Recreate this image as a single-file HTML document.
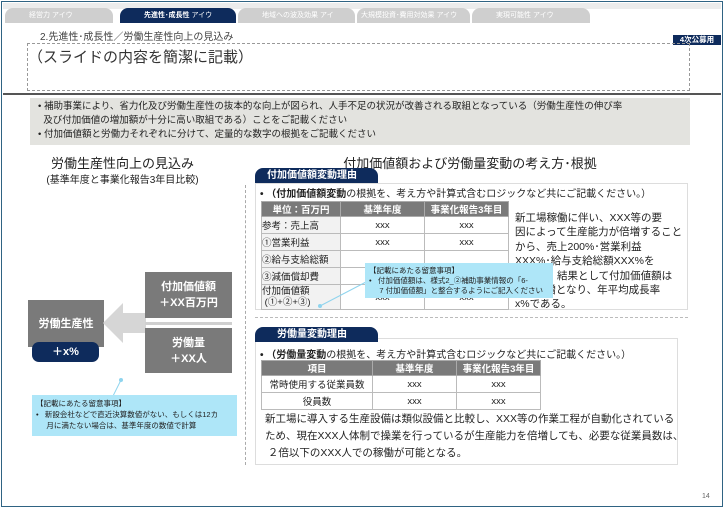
<!DOCTYPE html><html><head><meta charset="utf-8"><style>
*{margin:0;padding:0;box-sizing:border-box}
body{width:724px;height:509px;background:#fff;font-family:"Liberation Sans","Noto Sans CJK JP",sans-serif;position:relative;overflow:hidden;color:#222}
.a{position:absolute}
.tab{position:absolute;top:8px;height:15px;background:#cfcfcf;color:#fff;font-size:7px;line-height:15px;padding-left:24px;border-radius:8px 8px 0 0}
.pill{position:absolute;background:#0e2b5c;color:#fff;font-weight:bold;font-size:10px;border-radius:8px 8px 0 0;padding-left:12px;line-height:15px}
table{border-collapse:collapse;position:absolute;font-size:9.5px;table-layout:fixed}
td{border:1px solid #bbb;height:17px;text-align:center;color:#222}
th{background:#7a7a7a;color:#fff;border:1px solid #aaa;height:15px;font-size:9.5px}
.gb{position:absolute;background:#7a7a7a;color:#fff;font-weight:bold;font-size:11px;text-align:center;display:flex;align-items:center;justify-content:center;line-height:16px}
</style></head><body>
<div class="a" style="left:1px;top:1px;width:722px;height:506px;border:1.5px solid #2f6383"></div>
<div class="a" style="left:3px;top:3px;width:718px;height:6px;background:#ececec"></div>
<div class="tab" style="left:5px;width:108px">経営力 アイウ</div>
<div class="tab" style="left:120px;width:116px;background:#0e2b5c;font-weight:bold">先進性･成長性 <span style="font-weight:normal">アイウ</span></div>
<div class="tab" style="left:238px;width:117px">地域への波及効果 アイ</div>
<div class="tab" style="left:357px;width:113px;padding-left:4px">大規模投資･費用対効果 アイウ</div>
<div class="tab" style="left:472px;width:118px">実現可能性 アイウ</div>
<div class="a" style="left:40px;top:28px;font-size:10px;color:#404040">2.先進性･成長性／労働生産性向上の見込み</div>
<div class="a" style="left:673px;top:35px;width:48px;height:10px;background:#0e2b5c;color:#fff;font-size:7.5px;font-weight:bold;line-height:10px;text-align:center">4次公募用</div>
<div class="a" style="left:27px;top:43px;width:663px;height:48px;border:1px dashed #999"></div>
<div class="a" style="left:28px;top:46px;font-size:15px;color:#333">（スライドの内容を簡潔に記載）</div>
<div class="a" style="left:3px;top:93px;width:718px;height:2px;background:#555"></div>
<div class="a" style="left:30px;top:98px;width:660px;height:47px;background:#e3e3df;font-size:9.5px;line-height:14px;padding:2px 8px;color:#222">
• 補助事業により、省力化及び労働生産性の抜本的な向上が図られ、人手不足の状況が改善される取組となっている（労働生産性の伸び率<br>&nbsp;&nbsp;及び付加価値の増加額が十分に高い取組である）ことをご記載ください<br>• 付加価値額と労働力それぞれに分けて、定量的な数字の根拠をご記載ください</div>
<div class="a" style="left:30px;top:153px;width:185px;text-align:center;font-size:13px">労働生産性向上の見込み</div>
<div class="a" style="left:30px;top:171px;width:185px;text-align:center;font-size:10px">(基準年度と事業化報告3年目比較)</div>
<div class="a" style="left:245px;top:185px;height:280px;border-left:1px dashed #aaa"></div>
<div class="a" style="left:250px;top:153px;width:440px;text-align:center;font-size:13px">付加価値額および労働量変動の考え方･根拠</div>
<div class="gb" style="left:28px;top:300px;width:76px;height:47px">労働生産性</div>
<div class="a" style="left:32px;top:342px;width:67px;height:20px;background:#0e2b5c;border-radius:7px;color:#fff;font-weight:bold;font-size:11px;text-align:center;line-height:20px">＋x%</div>
<svg class="a" style="left:103px;top:303px" width="43" height="40"><polygon points="0,20 20,0 20,10 43,10 43,30 20,30 20,40" fill="#d6d6d6"/></svg>
<div class="gb" style="left:145px;top:272px;width:87px;height:46px">付加価値額<br>＋XX百万円</div>
<div class="a" style="left:145px;top:322px;width:87px;height:3px;background:#d0d0d0"></div>
<div class="gb" style="left:145px;top:328px;width:87px;height:45px">労働量<br>＋XX人</div>
<svg class="a" style="left:110px;top:378px" width="15" height="20"><line x1="11" y1="2" x2="3" y2="18" stroke="#8fd4ee" stroke-width="1"/><circle cx="11" cy="2" r="2" fill="#8fd4ee"/></svg>
<div class="a" style="left:32px;top:395px;width:205px;height:41px;background:#aee6f8;font-size:7.5px;line-height:11px;padding:3px 4px;color:#222">【記載にあたる留意事項】<br>•&nbsp;&nbsp;&nbsp;新設会社などで直近決算数値がない、もしくは12カ<br>&nbsp;&nbsp;&nbsp;&nbsp;&nbsp;月に満たない場合は、基準年度の数値で計算</div>
<div class="a" style="left:255px;top:183px;width:433px;height:127px;border:1px solid #ddd"></div>
<div class="pill" style="left:255px;top:168px;width:123px">付加価値額変動理由</div>
<div class="a" style="left:260px;top:185px;font-size:10px"><b>•&nbsp;（付加価値額変動</b>の根拠を、考え方や計算式含むロジックなど共にご記載ください。）</div>
<table style="left:261px;top:201px;width:247px">
<colgroup><col style="width:79px"><col style="width:84px"><col style="width:84px"></colgroup>
<tr><th>単位：百万円</th><th>基準年度</th><th>事業化報告3年目</th></tr>
<tr><td style="text-align:left;background:#f2f2f2">参考：売上高</td><td>xxx</td><td>xxx</td></tr>
<tr><td style="text-align:left;background:#f2f2f2">①営業利益</td><td>xxx</td><td>xxx</td></tr>
<tr><td style="text-align:left;background:#f2f2f2">②給与支給総額</td><td></td><td></td></tr>
<tr><td style="text-align:left;background:#f2f2f2">③減価償却費</td><td></td><td></td></tr>
<tr><td style="text-align:left;background:#f2f2f2;height:25px;line-height:11px">付加価値額<br>&nbsp;(①+②+③)</td><td>xxx</td><td>xxx</td></tr>
</table>
<div class="a" style="left:515px;top:211px;font-size:10.5px;line-height:14.4px;width:175px;white-space:nowrap">新工場稼働に伴い、XXX等の要<br>因によって生産能力が倍増すること<br>から、売上200%･営業利益<br>XXX%･給与支給総額XXX%を<br>見込む。結果として付加価値額は<br>XXX%増となり、年平均成長率<br>x%である。</div>
<svg class="a" style="left:300px;top:280px" width="70" height="30"><line x1="66" y1="2" x2="20" y2="26" stroke="#8fd4ee"/><circle cx="20" cy="26" r="2" fill="#8fd4ee"/></svg>
<div class="a" style="left:365px;top:263px;width:188px;height:35px;background:#aee6f8;font-size:7.5px;line-height:10px;padding:3px 4px">【記載にあたる留意事項】<br>•&nbsp;&nbsp;&nbsp;付加価値額は、様式2_②補助事業情報の「6-<br>&nbsp;&nbsp;&nbsp;&nbsp;&nbsp;7 付加価値額」と整合するようにご記入ください</div>
<div class="a" style="left:255px;top:317px;width:433px;border-top:1px dashed #bbb"></div>
<div class="a" style="left:255px;top:338px;width:423px;height:127px;border:1px solid #ddd"></div>
<div class="pill" style="left:255px;top:327px;width:123px;padding-left:22px">労働量変動理由</div>
<div class="a" style="left:260px;top:346px;font-size:10px"><b>•&nbsp;（労働量変動</b>の根拠を、考え方や計算式含むロジックなど共にご記載ください。）</div>
<table style="left:261px;top:360px;width:279px">
<colgroup><col style="width:111px"><col style="width:84px"><col style="width:84px"></colgroup>
<tr><th>項目</th><th>基準年度</th><th>事業化報告3年目</th></tr>
<tr><td>常時使用する従業員数</td><td>xxx</td><td>xxx</td></tr>
<tr><td>役員数</td><td>xxx</td><td>xxx</td></tr>
</table>
<div class="a" style="left:265px;top:411px;font-size:10.5px;line-height:17px;width:420px;white-space:nowrap">新工場に導入する生産設備は類似設備と比較し、XXX等の作業工程が自動化されている<br>ため、現在XXX人体制で操業を行っているが生産能力を倍増しても、必要な従業員数は、<br>&nbsp;２倍以下のXXX人での稼働が可能となる。</div>
<div class="a" style="left:702px;top:493px;font-size:7px;color:#666">14</div>
</body></html>
